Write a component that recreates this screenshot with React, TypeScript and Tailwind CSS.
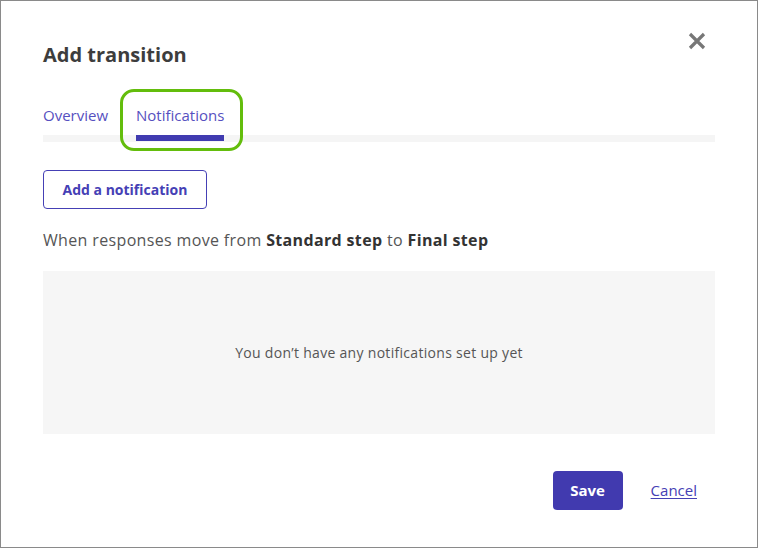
export default function App() {
  return (
    <div className="w-[759px] h-[549px] bg-white" style={{ fontFamily: "'Open Sans', Lato, sans-serif" }}>
      <div className="w-[758px] h-[548px] border border-[#8a8a8a] flex flex-col px-[42px]">
        <div className="flex items-start justify-between pt-[40px]">
          <h1 className="text-[20px] leading-[28px] font-bold text-[#3d3d3d]">Add transition</h1>
          <button className="mt-[-10px] mr-[8px] text-[#777]" aria-label="Close">
            <svg width="20" height="20" viewBox="0 0 20 20">
              <path d="M3 3 L17 17 M17 3 L3 17" stroke="currentColor" strokeWidth="3.2" />
            </svg>
          </button>
        </div>

        <div className="mt-[36px]">
          <div className="flex gap-[28px] text-[15px] text-[#5650c0]">
            <div className="pb-[10px] leading-[20px]">Overview</div>
            <div className="relative pb-[10px] leading-[20px]">
              Notifications
              <div className="absolute left-0 right-0 top-full h-[6px] bg-[#403bb0]" />
              <div className="absolute left-[-16px] right-[-19px] top-[-16px] h-[62px] rounded-[14px] border-[3px] border-[#63bd0c]" />
            </div>
          </div>
          <div className="h-[7px] bg-[#f5f5f5]" />
        </div>

        <div className="mt-[28px]">
          <button className="h-[39px] w-[164px] border border-[#4540b5] rounded-[4px] text-[14px] font-bold text-[#4540b5]">
            Add a notification
          </button>
        </div>

        <p className="mt-[20px] text-[16px] leading-[22px] tracking-[0.35px] text-[#555]">
          When responses move from <span className="font-bold text-[#333]">Standard step</span> to{" "}
          <span className="font-bold text-[#333]">Final step</span>
        </p>

        <div className="mt-[20px] h-[163px] bg-[#f6f6f6] flex items-center justify-center text-[14px] tracking-[0.3px] text-[#555]">
          You don’t have any notifications set up yet
        </div>

        <div className="mt-[37px] flex items-center justify-end gap-[28px] pr-[18px]">
          <button className="w-[70px] h-[39px] rounded-[4px] bg-[#413aaf] text-white text-[15px] font-bold">Save</button>
          <button className="text-[15px] text-[#4540b5] underline underline-offset-2">Cancel</button>
        </div>
      </div>
    </div>
  );
}
